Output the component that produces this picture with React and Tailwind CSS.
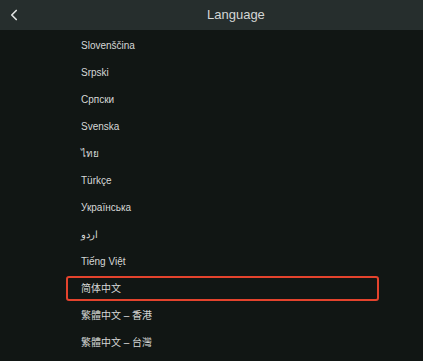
import { ChevronLeft } from "lucide-react"

const languages = [
  "Slovenščina",
  "Srpski",
  "Српски",
  "Svenska",
  "ไทย",
  "Türkçe",
  "Українська",
  "اردو",
  "Tiếng Việt",
  "简体中文",
  "繁體中文 – 香港",
  "繁體中文 – 台灣",
]

const selected = "简体中文"

export default function App() {
  return (
    <div
      className="h-[361px] w-full overflow-hidden bg-[#111614] text-[#d6d8d7]"
      style={{ fontFamily: '"Liberation Sans", Arial, "Noto Sans CJK SC", "Noto Sans", sans-serif' }}
    >
      <div className="relative flex h-[30px] items-center bg-[#262e2d]">
        <button className="flex h-[30px] w-[26px] items-center justify-center pl-[2px] text-[#e2e4e3]">
          <ChevronLeft size={18} strokeWidth={2.2} />
        </button>
        <div className="absolute left-[207px] top-0 flex h-[30px] items-center text-[13px] text-[#d4d6d5]">
          Language
        </div>
      </div>

      <ul className="flex flex-col gap-[2px] pt-[3px]">
        {languages.map((lang) => (
          <li
            key={lang}
            className={
              lang === selected
                ? "ml-[66px] flex h-[25px] w-[313px] items-center rounded-[3px] border-2 border-[#e4432d] pl-[13px] text-[10px]"
                : "ml-[66px] flex h-[25px] w-[313px] items-center pl-[15px] text-[10px]"
            }
          >
            {lang}
          </li>
        ))}
      </ul>
    </div>
  )
}
